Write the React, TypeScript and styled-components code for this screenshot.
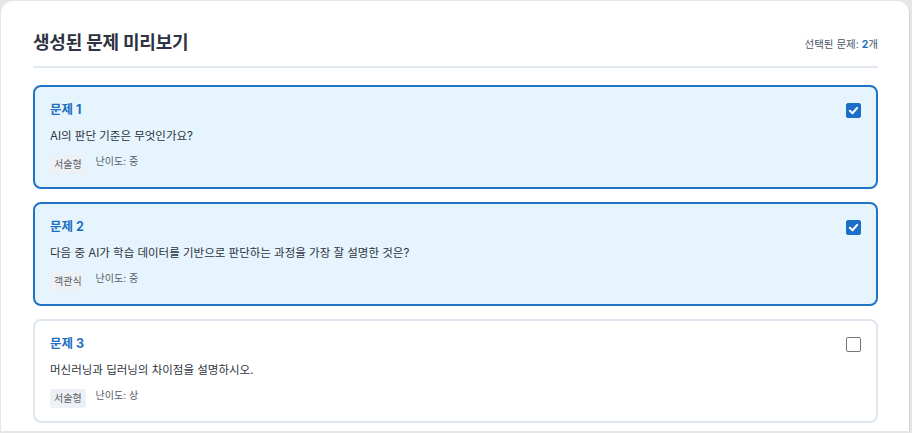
import React, { useState } from 'react';
import styled, { createGlobalStyle, css } from 'styled-components';

const GlobalStyle = createGlobalStyle`
  html, body {
    margin: 0;
    padding: 0;
    background: #e6e6e6;
    font-family: "Inter", "Noto Sans CJK KR", "Noto Sans", sans-serif;
    color: #2d3340;
  }
  * { box-sizing: border-box; }
`;

const Panel = styled.div`
  margin: 1px 0 0 1px;
  width: 908px;
  height: 430px;
  background: #fff;
  border-radius: 12px 12px 0 0;
  box-shadow: 1px 1px 0 #d4d4d4;
  padding: 30px 31px 0 32px;
  overflow: hidden;
`;

const Header = styled.div`
  display: flex;
  align-items: center;
  justify-content: space-between;
  padding-bottom: 11px;
  border-bottom: 2px solid #e2e8f0;
  margin-bottom: 17px;
`;

const Title = styled.h2`
  margin: 0;
  font-size: 18px;
  line-height: 24px;
  font-weight: 700;
  color: #2d3340;
  letter-spacing: -0.2px;
`;

const Count = styled.div`
  font-size: 10.5px;
  color: #4a5568;

  b {
    color: #1e6fbf;
    font-weight: 700;
  }
`;

const List = styled.div`
  display: flex;
  flex-direction: column;
  gap: 13px;
`;

const Card = styled.div<{ $selected: boolean }>`
  border: 2px solid #dfe6ef;
  border-radius: 8px;
  background: #fff;
  padding: 14px 15px 13px 15px;
  cursor: pointer;

  ${(p) =>
    p.$selected &&
    css`
      border-color: #2173c4;
      background: #e6f5fd;
    `}
`;

const CardTop = styled.div`
  display: flex;
  align-items: center;
  justify-content: space-between;
`;

const QTitle = styled.div`
  font-size: 12.5px;
  line-height: 17px;
  font-weight: 700;
  color: #1e6fbf;
`;

const Box = styled.span<{ $checked: boolean }>`
  width: 15px;
  height: 15px;
  margin-top: 1px;
  border-radius: 2px;
  display: flex;
  align-items: center;
  justify-content: center;
  background: #fff;
  border: 1px solid #767676;

  ${(p) =>
    p.$checked &&
    css`
      background: #1b6fc8;
      border-color: #1b6fc8;
    `}
`;

const Question = styled.p`
  margin: 9px 0 10px;
  font-size: 11.5px;
  line-height: 18px;
  color: #2d3340;
`;

const Meta = styled.div`
  display: flex;
  align-items: flex-start;
  gap: 10px;
`;

const Tag = styled.span`
  font-size: 10px;
  line-height: 13px;
  padding: 3px 4px;
  border-radius: 3px;
  background: #edf0f4;
  color: #555c68;
`;

const Level = styled.span`
  font-size: 10px;
  line-height: 13px;
  color: #555c68;
`;

function CheckBox({ checked }: { checked: boolean }) {
  return (
    <Box $checked={checked}>
      {checked && (
        <svg width="11" height="11" viewBox="0 0 12 12">
          <path d="M2 6.3 L4.9 9 L10 3.2" fill="none" stroke="#fff" strokeWidth="2.2" strokeLinecap="round" strokeLinejoin="round" />
        </svg>
      )}
    </Box>
  );
}

const questions = [
  { id: 1, text: 'AI의 판단 기준은 무엇인가요?', type: '서술형', level: '중' },
  { id: 2, text: '다음 중 AI가 학습 데이터를 기반으로 판단하는 과정을 가장 잘 설명한 것은?', type: '객관식', level: '중' },
  { id: 3, text: '머신러닝과 딥러닝의 차이점을 설명하시오.', type: '서술형', level: '상' },
];

export default function App() {
  const [selected, setSelected] = useState<number[]>([1, 2]);

  const toggle = (id: number) =>
    setSelected((s) => (s.includes(id) ? s.filter((x) => x !== id) : [...s, id]));

  return (
    <>
      <GlobalStyle />
      <Panel>
        <Header>
          <Title>생성된 문제 미리보기</Title>
          <Count>
            선택된 문제: <b>{selected.length}</b>개
          </Count>
        </Header>
        <List>
          {questions.map((q) => {
            const on = selected.includes(q.id);
            return (
              <Card key={q.id} $selected={on} onClick={() => toggle(q.id)}>
                <CardTop>
                  <QTitle>문제 {q.id}</QTitle>
                  <CheckBox checked={on} />
                </CardTop>
                <Question>{q.text}</Question>
                <Meta>
                  <Tag>{q.type}</Tag>
                  <Level>난이도: {q.level}</Level>
                </Meta>
              </Card>
            );
          })}
        </List>
      </Panel>
    </>
  );
}
